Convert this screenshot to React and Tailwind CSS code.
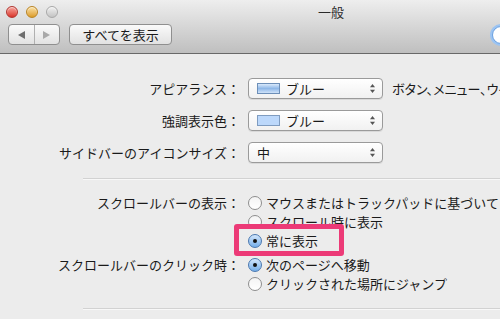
import React from "react";

const FONT = { fontFamily: '"Noto Sans CJK JP", "Noto Sans", sans-serif' };

function Light({ from, to, border }) {
  return (
    <div
      className={`w-[12px] h-[12px] rounded-full border ${border} bg-gradient-to-b ${from} ${to} shadow-[inset_0_1px_1px_rgba(255,255,255,0.6)]`}
    />
  );
}

function UpDown() {
  return (
    <svg width="7" height="11" viewBox="0 0 7 11" className="shrink-0">
      <path d="M3.5 1 L6 4.2 L1 4.2 Z" fill="#555" />
      <path d="M3.5 10 L6 6.8 L1 6.8 Z" fill="#555" />
    </svg>
  );
}

function Popup({ children }) {
  return (
    <div className="w-[135px] h-[21px] shrink-0 rounded-[4px] border border-[#9a9a9a] bg-gradient-to-b from-[#ffffff] to-[#f1f1f1] shadow-[0_1px_0_rgba(0,0,0,0.08)] flex items-center pl-[8px] pr-[6px]">
      <div className="flex-1 flex items-center gap-[6px] text-[13px] text-[#1a1a1a] leading-none">{children}</div>
      <UpDown />
    </div>
  );
}

function Radio({ on }) {
  return on ? (
    <div className="w-[14px] h-[14px] shrink-0 rounded-full border border-[#4a78b0] bg-gradient-to-b from-[#d2e6fb] to-[#74aee9] flex items-center justify-center">
      <div className="w-[4px] h-[4px] rounded-full bg-[#111]" />
    </div>
  ) : (
    <div className="w-[14px] h-[14px] shrink-0 rounded-full border border-[#8e8e8e] bg-gradient-to-b from-[#f4f4f4] to-[#ffffff]" />
  );
}

function RadioRow({ on, children }) {
  return (
    <div className="h-[19px] flex items-center gap-[4px] whitespace-nowrap">
      <Radio on={on} />
      <span className="text-[13px] text-[#1a1a1a] leading-none">{children}</span>
    </div>
  );
}

function Label({ children }) {
  return (
    <div className="w-[240px] shrink-0 text-right text-[13px] text-[#1a1a1a] leading-none whitespace-nowrap">
      {children}
    </div>
  );
}

export default function App() {
  return (
    <div className="w-[500px] h-[319px] overflow-hidden relative bg-[#ececec]" style={FONT}>
      {/* Title bar + toolbar */}
      <div className="h-[54px] bg-gradient-to-b from-[#eeeeee] to-[#bfbfbf] border-b border-[#686868] flex flex-col">
        <div className="h-[22px] flex items-center pl-[6px]">
          <div className="flex gap-[8px] pt-[1px]">
            <Light from="from-[#f7a09a]" to="to-[#d8302a]" border="border-[#b0352f]" />
            <Light from="from-[#fbe1a0]" to="to-[#dc9d22]" border="border-[#b98424]" />
            <Light from="from-[#f0f0f0]" to="to-[#c4c4c4]" border="border-[#a8a8a8]" />
          </div>
          <div className="ml-[260px] text-[13px] text-[#2a2a2a] leading-none">一般</div>
        </div>
        <div className="flex items-center pl-[8px] pt-[2px]">
          <div className="w-[52px] h-[21px] rounded-[4px] border border-[#8f8f8f] bg-gradient-to-b from-[#fafafa] to-[#e2e2e2] flex">
            <div className="flex-1 flex items-center justify-center border-r border-[#b0b0b0]">
              <svg width="9" height="10" viewBox="0 0 9 10"><path d="M1 5 L8 1 L8 9 Z" fill="#6e6e6e" /></svg>
            </div>
            <div className="flex-1 flex items-center justify-center">
              <svg width="9" height="10" viewBox="0 0 9 10"><path d="M8 5 L1 1 L1 9 Z" fill="#a9a9a9" /></svg>
            </div>
          </div>
          <div className="ml-[9px] w-[103px] h-[21px] rounded-[4px] border border-[#8f8f8f] bg-gradient-to-b from-[#fafafa] to-[#e2e2e2] flex items-center justify-center text-[13px] text-[#1a1a1a] leading-none">
            すべてを表示
          </div>
          <div className="ml-auto mr-[-40px] w-[48px] h-[18px] rounded-full bg-white border border-[#6aa0e0] shadow-[0_0_0_2px_#9cc4f2]" />
        </div>
      </div>

      {/* Content */}
      <div className="flex flex-col pt-[24px]">
        <div className="flex flex-col gap-[11px]">
          <div className="flex items-center gap-[8px]">
            <Label>アピアランス：</Label>
            <Popup>
              <div className="w-[23px] h-[11px] border border-[#6d8fb8] bg-gradient-to-b from-[#d9e9fb] via-[#8fb8e8] to-[#cfe2f8]" />
              <span>ブルー</span>
            </Popup>
            <span className="ml-[1px] text-[13px] text-[#1a1a1a] leading-none whitespace-nowrap [font-feature-settings:'palt']">ボタン、メニュー、ウインドウの外観</span>
          </div>
          <div className="flex items-center gap-[8px]">
            <Label>強調表示色：</Label>
            <Popup>
              <div className="w-[23px] h-[11px] border border-[#7f9cc0] bg-[#bcd8fb]" />
              <span>ブルー</span>
            </Popup>
          </div>
          <div className="flex items-center gap-[8px]">
            <Label>サイドバーのアイコンサイズ：</Label>
            <Popup>
              <span>中</span>
            </Popup>
          </div>
        </div>

        <div className="ml-[83px] mt-[15px] h-px bg-[#d2d2d2] border-b border-[#f8f8f8] box-content" />

        <div className="flex flex-col pt-[13px]">
          <div className="flex gap-[8px]">
            <div className="w-[240px] shrink-0 h-[19px] flex items-center justify-end">
              <span className="text-[13px] text-[#1a1a1a] leading-none whitespace-nowrap">スクロールバーの表示：</span>
            </div>
            <div className="flex flex-col">
              <RadioRow>マウスまたはトラックパッドに基づいて自動的に表示</RadioRow>
              <RadioRow>スクロール時に表示</RadioRow>
              <RadioRow on>常に表示</RadioRow>
            </div>
          </div>
          <div className="flex gap-[8px] mt-[5px]">
            <div className="w-[240px] shrink-0 h-[19px] flex items-center justify-end">
              <span className="text-[13px] text-[#1a1a1a] leading-none whitespace-nowrap">スクロールバーのクリック時：</span>
            </div>
            <div className="flex flex-col">
              <RadioRow on>次のページへ移動</RadioRow>
              <RadioRow>クリックされた場所にジャンプ</RadioRow>
            </div>
          </div>
        </div>

        <div className="ml-[83px] mt-[15px] h-px bg-[#d2d2d2] border-b border-[#f8f8f8] box-content" />
      </div>

      {/* Pink highlight overlay */}
      <div className="absolute left-[234px] top-[224px] w-[110px] h-[32px] rounded-[3px] border-[5px] border-[#ec3a77]" />
    </div>
  );
}
